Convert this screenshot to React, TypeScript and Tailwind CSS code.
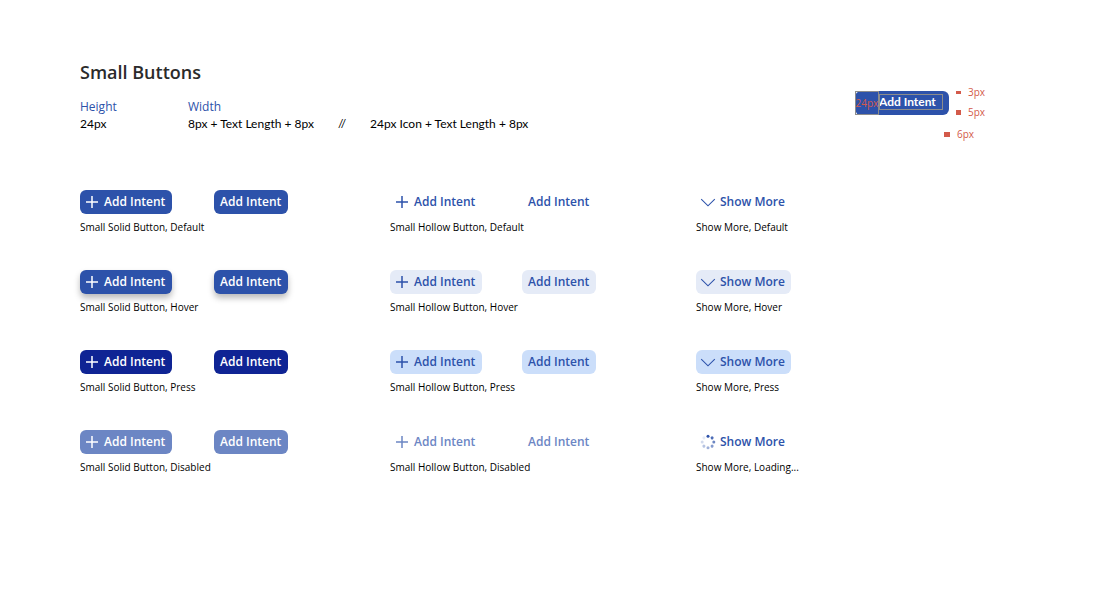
import type { ReactNode } from 'react'
import { clsx } from 'clsx'

const rows = [
  {
    state: 'Default',
    solid: 'bg-[#2d52aa] text-white',
    hollow: 'text-[#2d52aa]',
    more: 'text-[#2d52aa]',
  },
  {
    state: 'Hover',
    solid: 'bg-[#2d52aa] text-white shadow-[0_4px_6px_rgba(0,0,0,0.27)]',
    hollow: 'bg-[#e5ebf7] text-[#2d52aa]',
    more: 'bg-[#e5ebf7] text-[#2d52aa]',
  },
  {
    state: 'Press',
    solid: 'bg-[#0f2494] text-white',
    hollow: 'bg-[#cbdefa] text-[#2d52aa]',
    more: 'bg-[#cbdefa] text-[#2d52aa]',
  },
  {
    state: 'Disabled',
    solid: 'bg-[#6c86c4] text-white',
    hollow: 'text-[#6c86c4]',
    more: 'text-[#2d52aa]',
    disabled: true,
  },
]

// clockwise from 12 o'clock
const dots = [1, 0.85, 0.7, 0.58, 0.46, 0.34, 0.22, 0.12]

function PlusIcon() {
  return (
    <svg className="size-6 shrink-0" viewBox="0 0 24 24" fill="none" stroke="currentColor" strokeWidth="1.5">
      <path d="M6 12h12M12 6v12" />
    </svg>
  )
}

function ChevronIcon() {
  return (
    <svg className="size-6 shrink-0" viewBox="0 0 24 24" fill="none" stroke="currentColor" strokeWidth="1.1">
      <path d="M5.2 9.2 12 15.8l6.8-6.6" />
    </svg>
  )
}

function SpinnerIcon() {
  return (
    <svg className="size-6 shrink-0" viewBox="0 0 24 24" fill="currentColor">
      {dots.map((opacity, i) => (
        <circle key={i} cx="12" cy="6.2" r="1.5" opacity={opacity} transform={`rotate(${i * 45} 12 12)`} />
      ))}
    </svg>
  )
}

type SmallButtonProps = {
  icon?: ReactNode
  className?: string
  disabled?: boolean
  children: ReactNode
}

function SmallButton({ icon, className, disabled, children }: SmallButtonProps) {
  return (
    <button
      type="button"
      disabled={disabled}
      className={clsx(
        'flex h-6 items-center rounded-md text-xs font-semibold whitespace-nowrap',
        icon ? 'min-w-23 pr-1.5' : 'min-w-[74px] px-1.5',
        className
      )}
    >
      {icon}
      {children}
    </button>
  )
}

function Caption({ children }: { children: ReactNode }) {
  return <p className="mt-[5px] text-[10px] leading-4 text-black">{children}</p>
}

function Measure({ size, mark, className }: { size: string; mark: string; className?: string }) {
  return (
    <li className={clsx('flex items-center gap-[7px]', className)}>
      <span className={clsx('bg-[#d35a4a]', mark)} />
      {size}
    </li>
  )
}

export default function App() {
  return (
    <main className="min-h-screen bg-white px-20 pt-15 pb-20 font-['Open_Sans','Noto_Sans',sans-serif]">
      <header className="flex items-start justify-between">
        <div>
          <h1 className="text-lg leading-6 font-semibold text-[#2b2b2b]">Small Buttons</h1>
          <dl className="mt-3.5 flex gap-18 text-xs">
            <div className="w-9">
              <dt className="leading-[18px] text-[#2d52aa]">Height</dt>
              <dd className="font-['Lato',sans-serif] leading-4 text-black">24px</dd>
            </div>
            <div>
              <dt className="leading-[18px] text-[#2d52aa]">Width</dt>
              <dd className="flex gap-6 font-['Lato',sans-serif] leading-4 text-black">
                <span>8px + Text Length + 8px</span>
                <span>//</span>
                <span>24px Icon + Text Length + 8px</span>
              </dd>
            </div>
          </dl>
        </div>

        {/* Annotated spacing example */}
        <div className="mt-[22px] mr-[35px] flex gap-[7px] text-[10px] leading-5 text-[#d35a4a]">
          <div className="mt-[9px] flex h-6 items-start rounded-md bg-[#2d52aa] pr-1.5">
            <span className="flex size-6 items-center justify-center outline -outline-offset-1 outline-[#8c8c8c]">
              24px
            </span>
            <span className="mt-[3px] h-4 w-16 font-['Lato',sans-serif] text-xs leading-4 font-bold whitespace-nowrap text-white outline -outline-offset-1 outline-[#8c8c8c]">
              Add Intent
            </span>
          </div>
          <ul>
            <Measure size="3px" mark="h-[3px] w-[5px]" />
            <Measure size="5px" mark="h-[5px] w-[5px]" />
            <Measure size="6px" mark="h-[5px] w-1.5" className="mt-0.5 -ml-3" />
          </ul>
        </div>
      </header>

      <section className="mt-[46px] grid grid-cols-[310px_306px_1fr] gap-y-[35px]">
        {rows.map((row) => (
          <div key={row.state} className="contents">
            <div>
              <div className="flex gap-[42px]">
                <SmallButton icon={<PlusIcon />} className={row.solid} disabled={row.disabled}>
                  Add Intent
                </SmallButton>
                <SmallButton className={row.solid} disabled={row.disabled}>
                  Add Intent
                </SmallButton>
              </div>
              <Caption>Small Solid Button, {row.state}</Caption>
            </div>
            <div>
              <div className="flex gap-10">
                <SmallButton icon={<PlusIcon />} className={row.hollow} disabled={row.disabled}>
                  Add Intent
                </SmallButton>
                <SmallButton className={row.hollow} disabled={row.disabled}>
                  Add Intent
                </SmallButton>
              </div>
              <Caption>Small Hollow Button, {row.state}</Caption>
            </div>
            <div>
              <div className="flex">
                <SmallButton
                  icon={row.disabled ? <SpinnerIcon /> : <ChevronIcon />}
                  className={row.more}
                  disabled={row.disabled}
                >
                  Show More
                </SmallButton>
              </div>
              <Caption>Show More, {row.disabled ? 'Loading...' : row.state}</Caption>
            </div>
          </div>
        ))}
      </section>
    </main>
  )
}
